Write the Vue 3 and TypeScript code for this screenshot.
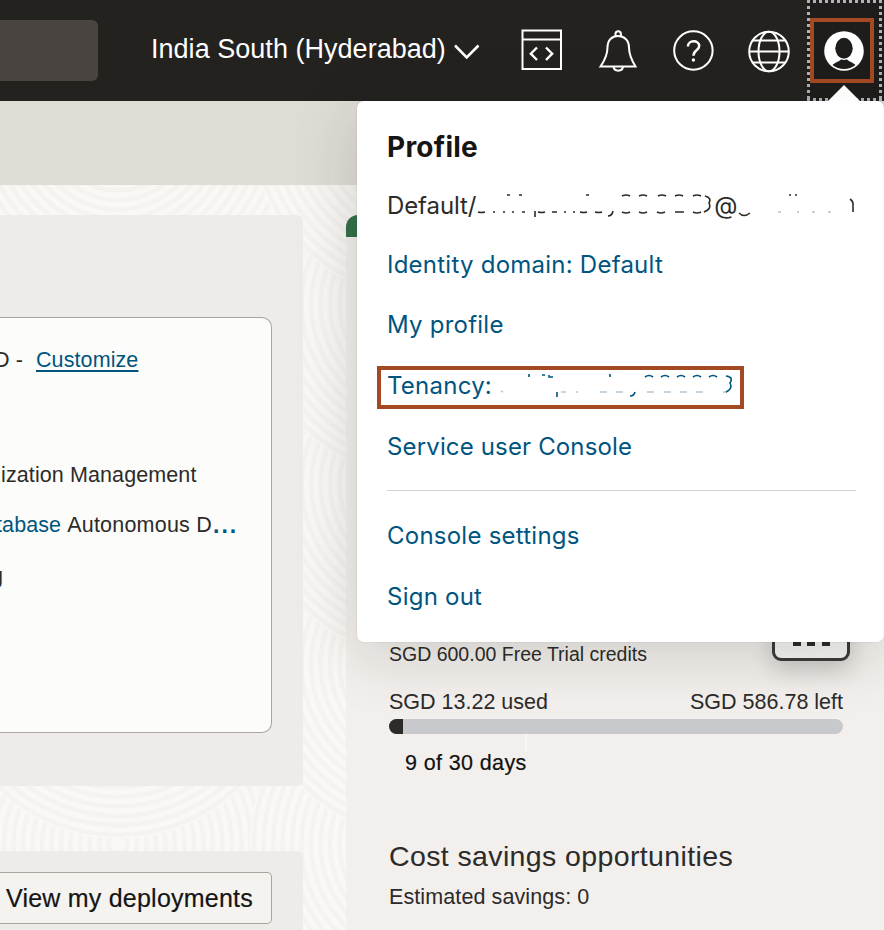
<script setup lang="ts">
interface MenuItem {
  label: string
  redacted?: boolean
}

const accountLinks: MenuItem[] = [
  { label: 'Identity domain: Default' },
  { label: 'My profile' },
  { label: 'Tenancy:', redacted: true },
  { label: 'Service user Console' },
]
const sessionLinks: MenuItem[] = [{ label: 'Console settings' }, { label: 'Sign out' }]

const usage = { used: 13.22, total: 600 }
const usedWidth = `${((usage.used / usage.total) * 100 + 0.9).toFixed(1)}%`

// Overlapping ripple discs, painted from the bottom row upwards.
interface Disc {
  x: number
  y: number
}
const discs: Disc[] = []
for (let y = 1024; y >= -50; y -= 180) {
  for (const x of [-189, 118, 425]) discs.push({ x, y })
}
const rings: number[] = Array.from({ length: 18 }, (_, i) => 171 - i * 9.5)
</script>

<template>
  <div class="page">
    <header class="topbar">
      <div class="search"></div>
      <div class="region">
        <span class="region-name">India South (Hyderabad)</span>
        <svg class="chevron" width="28" height="18" viewBox="0 0 28 18"><path d="M2 2.500 L13.700 14.500 L25.500 2.500" /></svg>
      </div>
      <nav class="tools">
        <svg class="tool" width="46" height="46" viewBox="0 0 46 46">
          <path d="M3.500 3.500h38.500v38.500h-38.500z M3.500 12.500h38.500" />
          <path class="thick" d="M18 20.500 L11.800 26.700 L18 33 M27 20.500 L33.200 26.700 L27 33" />
        </svg>
        <svg class="tool" width="46" height="46" viewBox="0 0 46 46">
          <path d="M5.500 39.500 C10 33 12.500 27 12.500 20.500 C12.500 13 17 9 23 9 C29 9 34 13 34 20.500 C34 27 36.500 33 40.500 39.500 Z" />
          <path d="M20.500 9 V7 A2.700 2.700 0 0 1 25.900 7 V9 M18.500 39.700 C19 45 27.500 45 28 39.700" />
        </svg>
        <svg class="tool" width="46" height="46" viewBox="0 0 46 46">
          <circle cx="22.400" cy="23.500" r="19.200" />
          <path class="mid" d="M16.900 19.500 C16.900 12.500 28.200 12.500 28.200 19 C28.200 23.500 22.400 23.200 22.400 28.800" />
          <circle class="dot" cx="22.400" cy="33" r="1.700" />
        </svg>
        <svg class="tool" width="46" height="46" viewBox="0 0 46 46">
          <circle cx="22" cy="24.500" r="19.800" />
          <ellipse cx="22" cy="24.500" rx="10.500" ry="19.800" />
          <path d="M2.200 24.500h39.600 M6 13.500h32 M6 35.500h32" />
        </svg>
      </nav>
      <button class="profile-button" type="button">
        <span class="profile-highlight">
          <svg width="40" height="40" viewBox="0 0 40 40">
            <circle cx="20" cy="20" r="19.800" fill="#fff" />
            <path d="M8.500 34 C10.500 31.500 15.500 30.800 17.200 28 H22.800 C24.500 30.800 29.500 31.500 31.500 34 A18.200 18.200 0 0 1 8.500 34 Z" fill="#1e1d1b" />
            <ellipse cx="20" cy="17.300" rx="8.700" ry="10.500" fill="#1e1d1b" />
            <path d="M15 26.500 Q20 30.500 25 26.500" fill="none" stroke="#fff" stroke-width="1.100" />
          </svg>
        </span>
      </button>
    </header>

    <div class="banner"></div>

    <main class="body">
      <svg class="ripples" width="884" height="745" viewBox="0 185 884 745" aria-hidden="true">
        <g v-for="(d, i) in discs" :key="i">
          <circle :cx="d.x" :cy="d.y" r="175" class="disc" />
          <circle v-for="r in rings" :key="r" :cx="d.x" :cy="d.y" :r="r" class="ring" />
        </g>
      </svg>

      <section class="left">
        <div class="card">
          <div class="inner">
            <p class="row first"><span>D -</span><a class="underlined">Customize</a></p>
            <p class="row second">nization Management</p>
            <p class="row third"><a>tabase</a> <span class="svc">Autonomous D</span><a class="more">...</a></p>
            <p class="row fourth">g</p>
          </div>
        </div>
        <div class="card lower">
          <button class="deploy" type="button">View my deployments</button>
        </div>
      </section>

      <aside class="right">
        <div class="ribbon"></div>
        <div class="credits">
          <div class="credit-head">
            <span class="trial">SGD 600.00 Free Trial credits</span>
            <button class="more-button" type="button"><i></i><i></i><i></i></button>
          </div>
          <div class="amounts"><span>SGD 13.22 used</span><span class="remaining">SGD 586.78 left</span></div>
          <div class="bar"><div class="fill" :style="{ width: usedWidth }"></div></div>
          <div class="tick"></div>
          <p class="days">9 of 30 days</p>
          <h2>Cost savings opportunities</h2>
          <p class="savings">Estimated savings: 0</p>
        </div>
      </aside>
    </main>

    <div class="popup">
      <div class="arrow"></div>
      <h1>Profile</h1>
      <div class="item account">
        <span>Default/</span>
        <svg class="scrubbed" width="238" height="30" viewBox="0 0 238 30" aria-hidden="true">
          <path d="M31 5h3M43 5h3M110 5h3M146 6q4-2 8 0M163 6q4-2 8 0M182 6q4-2 8 0M199 6q4-2 8 0M217 6q4-2 8 0M2 22q3 1 7 0M17 22h2M27 22h2M36 22h2M46 22h3M59 21v6M62 22q4 1 7 0M76 22h5M88 22h2M97 22h2M104 22q4 1 7 0M119 22q4 1 7 0M132 26q4 0 5-5M146 22q4 2 8 0M163 22q4 2 8 0M181 22q4 2 8 0M199 22h9M217 22q4 2 8 0M229 6q7 2 4 7q3 6-5 9" />
        </svg>
        <span>@</span>
        <svg class="scrubbed" width="119" height="30" viewBox="0 0 119 30" aria-hidden="true">
          <path d="M2 23q5 5 11 0M52 5h2M58 5h2M113 9q3 2 3 5v8" />
          <path class="faint" d="M41 22h3M60 22h2M75 22h3M91 22h3" />
        </svg>
      </div>
      <a v-for="item in accountLinks" :key="item.label" class="item" :class="{ boxed: item.redacted }">
        <span>{{ item.label }}</span>
        <svg v-if="item.redacted" class="scrubbed" width="240" height="30" viewBox="0 0 240 30" aria-hidden="true">
          <path d="M37 4v3M50 5h3M57 5v2h4M118 4v3M153 7q4-3 8 0M169 7q4-3 8 0M185 7q4-3 8 0M201 7q4-3 8 0M217 7q4-3 8 0M234 6q8 1 4 7q3 6-4 9M65 22v5M138 26q4 0 5-4" />
          <path class="faint" d="M9 21l2 1M69 22h5M84 22h2M108 22h7M124 22h7M155 22h7M172 22h7M188 22h7M204 22h7M231 22h4" />
        </svg>
      </a>
      <hr />
      <a v-for="item in sessionLinks" :key="item.label" class="item">{{ item.label }}</a>
    </div>
  </div>
</template>

<style>
body { margin: 0; overflow: hidden; }
</style>

<style scoped>
* { box-sizing: border-box; }
.page { position: relative; width: 884px; height: 930px; overflow: hidden; background: #faf7f5; font-family: "Liberation Sans", Arial, sans-serif; color: #2c2b29; }
p, h1, h2 { margin: 0; white-space: nowrap; }
button { font-family: inherit; }
.topbar { display: flex; height: 101px; background: #24221f; }
.search { width: 98px; height: 61px; margin-top: 20px; border-radius: 0 6px 6px 0; background: #4a4440; flex: none; }
.region { display: flex; align-items: center; width: 421px; height: 98px; padding-left: 53px; color: #fff; flex: none; }
.region-name { font-size: 27px; letter-spacing: 0.03px; white-space: nowrap; width: 302px; }
.chevron { fill: none; stroke: #fff; stroke-width: 2.6; margin-top: 6px; }
.tools { display: flex; gap: 30px; padding-top: 27px; width: 288px; flex: none; }
.tool { flex: none; fill: none; stroke: #fff; stroke-width: 2; }
.tool .thick { stroke-width: 2.4; }
.tool .mid { stroke-width: 2.4; }
.tool .dot { fill: #fff; stroke: none; }
.profile-button { display: flex; align-items: flex-start; width: 77px; height: 101px; flex: none; border: 0; padding: 18px 0 0 3px; background:
  repeating-linear-gradient(90deg, #b2b1b8 0 3px, transparent 3px 6px) 0 0 / 75px 3px no-repeat,
  repeating-linear-gradient(90deg, #b2b1b8 0 3px, transparent 3px 6px) 0 98px / 75px 3px no-repeat,
  repeating-linear-gradient(180deg, #b2b1b8 0 3px, transparent 3px 6px) 0 0 / 3px 101px no-repeat,
  repeating-linear-gradient(180deg, #b2b1b8 0 3px, transparent 3px 6px) 72px 0 / 3px 101px no-repeat,
  #1e1d1b; }
.profile-highlight { display: flex; align-items: center; justify-content: center; width: 64px; height: 65px; padding-left: 4px; border: 4px solid #a34a22; }
.banner { height: 84px; background: #dfdcd5; }
.body { position: relative; display: flex; gap: 43px; height: 745px; }
.ripples { position: absolute; left: 0; top: 0; }
.disc { fill: #faf7f5; }
.ring { fill: none; stroke: #f5f2f0; stroke-width: 4.5; }
.left { position: relative; width: 303px; padding-top: 30px; flex: none; }
.card { height: 571px; padding-top: 102px; border-radius: 0 6px 6px 0; background: #efebe8; }
.lower { height: 120px; margin-top: 65px; padding-top: 21px; }
.inner { width: 272px; height: 416px; border: 1px solid #aaa39f; border-left: 0; border-radius: 0 10px 10px 0; background: #fcfcfa; overflow: hidden; padding-top: 30px; }
.row { display: flex; height: 24px; line-height: 24px; font-size: 21.500px; letter-spacing: 0.1px; }
.row a { color: #00557f; }
.first { margin-left: -6px; gap: 13px; }
.underlined { text-decoration: underline; text-underline-offset: 3px; text-decoration-thickness: 1.5px; letter-spacing: 0.1px; }
.second { margin: 91px 0 0 -11px; }
.third { margin: 26px 0 0 -4px; }
.svc { margin-left: 6px; letter-spacing: 0.22px; }
.row .more { font-weight: bold; font-size: 23px; letter-spacing: 2px; margin-left: 1px; }
.fourth { margin: 27px 0 0 -9px; }
.deploy { display: flex; justify-content: flex-end; align-items: center; width: 272px; height: 52px; padding: 0 18px 0 0; border: 1px solid #aaa39f; border-left: 0; border-radius: 0 5px 5px 0; background: #f5f3f0; font-size: 25px; letter-spacing: 0.23px; color: #161513; white-space: nowrap; -webkit-text-stroke: 0.2px #161513; }
.right { position: relative; width: 538px; margin-top: 30px; height: 715px; border-radius: 12px 0 0 0; overflow: hidden; background: #f3efec; flex: none; }
.ribbon { height: 22px; background: #34704a; }
.credits { padding: 393px 34px 0 43px; }
.credit-head { display: flex; justify-content: space-between; height: 58px; }
.trial { font-size: 19.500px; line-height: 48px; white-space: nowrap; }
.more-button { display: flex; justify-content: center; gap: 6.500px; width: 78px; height: 52px; margin: -21px 0 0; padding: 30px 0 0; border: 3px solid #3c3a38; border-radius: 9px; background: #f7f6f4; box-shadow: 0 10px 22px rgba(0, 0, 0, 0.16); }
.more-button i { width: 8px; height: 4px; background: #2c2b29; }
.amounts { display: flex; justify-content: space-between; height: 31px; font-size: 21.500px; line-height: 28px; padding-right: 7px; }
.bar { width: 454px; height: 15px; border-radius: 8px; overflow: hidden; background: #c8c9cd; }
.fill { height: 15px; background: #2c2b29; }
.tick { width: 2px; height: 18px; margin-left: 136px; background: #faf8f7; }
.days { margin-left: 16px; font-size: 21.500px; letter-spacing: 0.38px; line-height: 22px; color: #111; -webkit-text-stroke: 0.2px #111; }
h2 { margin-top: 65px; font-size: 28.500px; letter-spacing: 0.38px; font-weight: 400; line-height: 34px; }
.savings { margin-top: 12px; font-size: 21.500px; letter-spacing: 0.1px; line-height: 24px; }
.popup { position: absolute; left: 357px; top: 101px; width: 527px; height: 541px; padding: 29px 28px 0 30px; border-radius: 7px; background: #fff; box-shadow: 0 12px 64px rgba(20, 30, 20, 0.17), 0 0 2px rgba(0, 0, 0, 0.14); font-family: Inter, sans-serif; font-size: 24px; }
.arrow { position: absolute; left: 471px; top: -16px; border: 16px solid transparent; border-top: 0; border-bottom-color: #fcfcfb; }
h1 { font-size: 28px; letter-spacing: 0.25px; line-height: 34px; font-weight: 700; color: #161513; height: 46px; }
.item { display: flex; align-items: center; height: 60.500px; letter-spacing: 0.24px; color: #00557f; white-space: nowrap; }
.account { height: 58px; color: #2c2b29; letter-spacing: -0.1px; }
.scrubbed { flex: none; fill: none; stroke: currentColor; stroke-width: 1.6; }
.faint { opacity: 0.3; }
.boxed { width: 367px; height: 43px; margin: 11px 0 7px -10px; padding: 0 0 5px 6px; border: 4px solid #a34a22; }
.boxed + .item { letter-spacing: 0.15px; }
hr { height: 1px; margin: 13px 0 15px 0; border: 0; background: #d5d3d1; }
</style>
